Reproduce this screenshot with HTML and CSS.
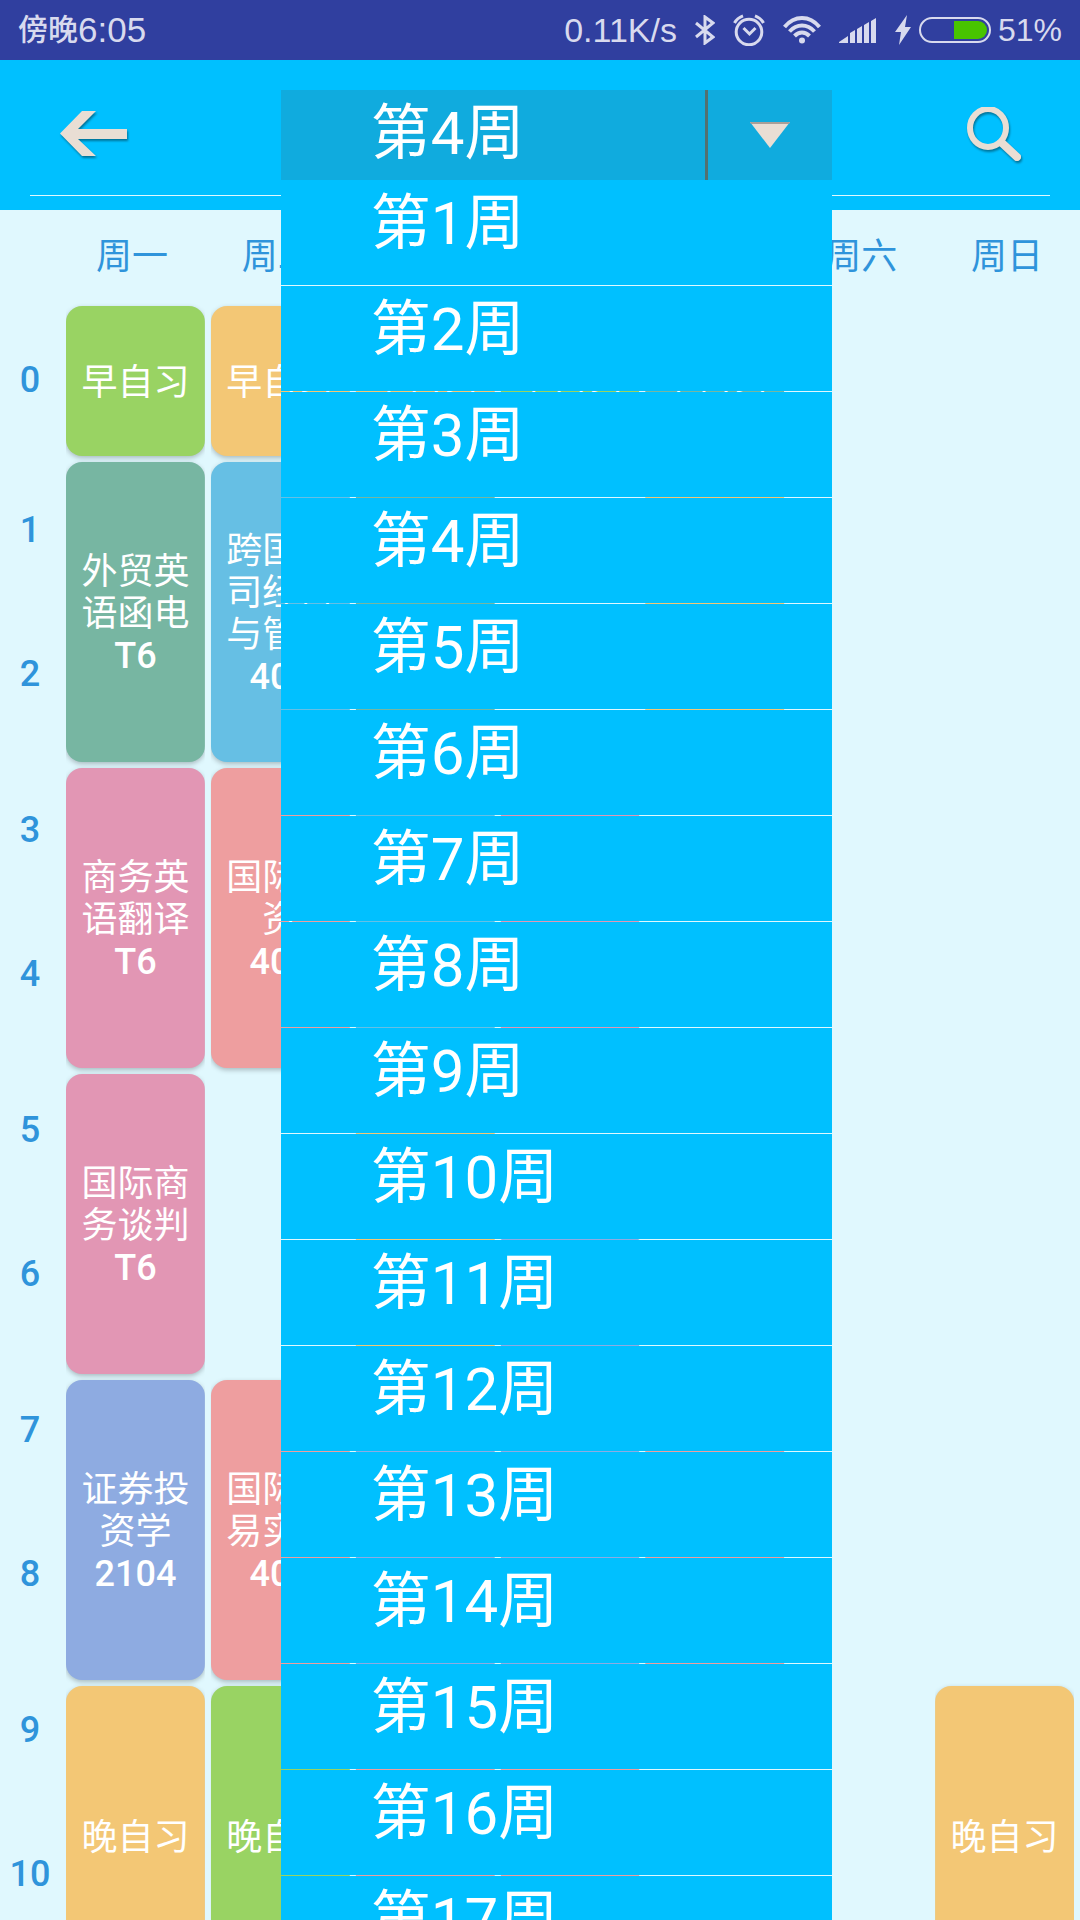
FILE: index.html
```
<!DOCTYPE html>
<html lang="zh-CN">
<head>
<meta charset="utf-8">
<meta name="viewport" content="width=device-width, initial-scale=1">
<title>课程表</title>
<link rel="stylesheet" href="styles.css">
</head>
<body>
<div class="status">
  <div class="clock"><span class="period">傍晚</span><span>6:05</span></div>
  <div class="indicators">
    <span class="speed">0.11K/s</span>
    <svg class="bluetooth" width="20" height="30" viewBox="0 0 20 30" aria-label="蓝牙"><path d="M1 8l17 14-8 6V2l8 6L1 22" fill="none" stroke="currentColor" stroke-width="3"/></svg>
    <svg class="alarm" width="32" height="32" viewBox="0 0 32 32" aria-label="闹钟"><g fill="none" stroke="currentColor" stroke-width="3"><circle cx="16" cy="18" r="12.8"/><path d="M10.5 14l6 6 6-6"/><path d="M1.500 9Q4 4 10 1.800M30.500 9Q28 4 22 1.800"/></g></svg>
    <svg class="wifi" width="38" height="28" viewBox="0 0 38 28" aria-label="无线网络"><g fill="none" stroke="currentColor" stroke-width="4"><path d="M1.500 11Q9 2 19 2T36.500 11"/><path d="M6.500 15.500Q12 9.500 19 9.500T31.500 15.500"/><path d="M11.500 20Q15 16.500 19 16.500T26.500 20"/></g><circle cx="19" cy="24.500" r="3"/></svg>
    <svg class="signal" width="38" height="26" viewBox="0 0 38 26" aria-label="信号"><path d="M0 26v-1l9-6v7zM11 26V16l5-3v13zM18 26V12l5-3v17zM25 26V8l5-3v21zM32 26V4l5-3v25z"/></svg>
    <svg class="bolt" width="16" height="30" viewBox="0 0 16 30" aria-label="充电中"><path d="M12 0L0 17h6L4 30 16 12h-6z"/></svg>
    <svg class="battery" width="72" height="26" viewBox="0 0 72 26" aria-label="电量"><rect x="1" y="1" width="70" height="24" rx="12" fill="none" stroke="currentColor" stroke-width="2"/><path class="charge" d="M35 4h24a9 9 0 0 1 0 18H35z"/></svg>
    <span class="percent">51%</span>
  </div>
</div>

<header class="toolbar">
  <div class="actions">
    <button class="icon-button back" type="button" aria-label="返回">
      <svg width="68" height="48" viewBox="0 0 68 48"><path d="M0 22.500L22 0h14L18 18h49v10H18l18 17H22z"/></svg>
    </button>
    <div class="week-picker">
      <button class="current" type="button" aria-haspopup="listbox" aria-expanded="true" aria-controls="weeks">
        <span class="current-week">第4周</span>
        <span class="arrow"><svg width="40" height="26" viewBox="0 0 40 26"><path d="M0 0h40L20 26z"/><path class="arrow-edge" d="M0 0h40l-1 2H1z"/></svg></span>
      </button>
      <ul class="weeks" id="weeks" role="listbox" aria-label="选择周次">
        <li role="option"><button type="button">第1周</button></li>
        <li role="option"><button type="button">第2周</button></li>
        <li role="option"><button type="button">第3周</button></li>
        <li role="option" aria-selected="true"><button type="button">第4周</button></li>
        <li role="option"><button type="button">第5周</button></li>
        <li role="option"><button type="button">第6周</button></li>
        <li role="option"><button type="button">第7周</button></li>
        <li role="option"><button type="button">第8周</button></li>
        <li role="option"><button type="button">第9周</button></li>
        <li role="option"><button type="button">第10周</button></li>
        <li role="option"><button type="button">第11周</button></li>
        <li role="option"><button type="button">第12周</button></li>
        <li role="option"><button type="button">第13周</button></li>
        <li role="option"><button type="button">第14周</button></li>
        <li role="option"><button type="button">第15周</button></li>
        <li role="option"><button type="button">第16周</button></li>
        <li role="option"><button type="button">第17周</button></li>
      </ul>
    </div>
    <button class="icon-button search" type="button" aria-label="搜索">
      <svg width="56" height="56" viewBox="0 0 56 56"><g fill="none" stroke="currentColor"><ellipse cx="21" cy="21" rx="18" ry="19" stroke-width="6"/><path d="M35 36l15 14" stroke-width="8" stroke-linecap="round"/></g></svg>
    </button>
  </div>
  <hr class="rule">
</header>

<main class="timetable">
  <div class="days">
    <span>周一</span><span>周二</span><span>周三</span><span>周四</span><span>周五</span><span>周六</span><span>周日</span>
  </div>
  <div class="grid">
    <div class="hours">
      <div class="slot"><span>0</span></div>
      <div class="slot double"><span>1</span><span>2</span></div>
      <div class="slot double"><span>3</span><span>4</span></div>
      <div class="slot double"><span>5</span><span>6</span></div>
      <div class="slot double"><span>7</span><span>8</span></div>
      <div class="slot double"><span>9</span><span>10</span></div>
    </div>

    <div class="lesson d1 p0 green">早自习</div>
    <div class="lesson d1 p1 teal">外贸英语函电<b>T6</b></div>
    <div class="lesson d1 p3 pink">商务英语翻译<b>T6</b></div>
    <div class="lesson d1 p5 pink">国际商务谈判<b>T6</b></div>
    <div class="lesson d1 p7 violet">证券投资学<b>2104</b></div>
    <div class="lesson d1 p9 amber">晚自习</div>

    <div class="lesson d2 p0 amber">早自习</div>
    <div class="lesson d2 p1 blue">跨国公司经营与管理<b>403</b></div>
    <div class="lesson d2 p3 coral">国际投资<b>403</b></div>
    <div class="lesson d2 p7 coral">国际贸易实务<b>403</b></div>
    <div class="lesson d2 p9 green">晚自习</div>

    <div class="lesson d3 p0 amber">早自习</div>
    <div class="lesson d3 p1 teal"></div>
    <div class="lesson d3 p3 blue"></div>
    <div class="lesson d3 p5 amber"></div>
    <div class="lesson d3 p7 violet"></div>
    <div class="lesson d3 p9 coral"></div>

    <div class="lesson d4 p0 green">早自习</div>
    <div class="lesson d4 p3 pink"></div>
    <div class="lesson d4 p6 violet"></div>
    <div class="lesson d4 p7 violet"></div>
    <div class="lesson d4 p9 coral"></div>

    <div class="lesson d5 p0 teal">早自习</div>
    <div class="lesson d5 p1 amber"></div>
    <div class="lesson d5 p7 coral"></div>

    <div class="lesson d7 p9 amber">晚自习</div>
  </div>
</main>
</body>
</html>
```
FILE: styles.css
```
* {
  box-sizing: border-box;
}

body {
  margin: 0;
  height: 100vh;
  overflow: hidden;
  display: flex;
  flex-direction: column;
  background: #e0f8fe;
  color: #fff;
  font-family: Roboto, "Noto Sans CJK SC", sans-serif;
}

button {
  margin: 0;
  padding: 0;
  border: 0;
  background: none;
  color: inherit;
  font: inherit;
  cursor: pointer;
}

svg {
  display: block;
  fill: currentColor;
}

/* Status bar */
.status {
  flex: none;
  display: flex;
  justify-content: space-between;
  align-items: center;
  height: 60px;
  padding: 0 18px;
  background: #303f9f;
  color: #d8daee;
  font-family: "Liberation Sans", "Noto Sans CJK SC", sans-serif;
  font-size: 34px;
  line-height: 60px;
}

.clock,
.indicators {
  display: flex;
  align-items: center;
}

.clock {
  font-size: 35px;
}

.period {
  font-size: 30px;
  font-weight: 500;
}

.speed,
.bluetooth,
.alarm,
.wifi,
.signal {
  margin-right: 18px;
}

.bolt {
  margin-right: 8px;
}

.battery {
  margin-right: 7px;
}

.charge {
  fill: #48c400;
}

.percent {
  font-size: 32px;
}

/* Toolbar */
.toolbar {
  flex: none;
  position: relative;
  z-index: 1;
  padding: 30px 0 14px;
  background: #00c0ff;
}

.actions {
  display: grid;
  grid-template-columns: 26fr 51fr 23fr;
  height: 90px;
}

.icon-button {
  display: flex;
  align-items: center;
  color: #e9ded4;
  filter: drop-shadow(1px 2px 1px rgba(0, 0, 0, 0.4));
}

.back {
  padding-left: 60px;
}

.search {
  justify-content: flex-end;
  padding-right: 57px;
}

.rule {
  height: 1px;
  margin: 15px 30px 0;
  border: 0;
  background: #e0f8fe;
}

/* Week picker */
.week-picker {
  position: relative;
  font-size: 60px;
  line-height: 88px;
}

.current {
  display: flex;
  width: 100%;
  height: 90px;
  background: #10abde;
  text-align: left;
}

.current-week {
  flex: 1;
  padding-left: 90px;
}

.arrow {
  display: flex;
  align-items: center;
  width: 127px;
  height: 90px;
  padding-left: 42px;
  border-left: 3px solid #53706f;
  color: #e9ded4;
}

.arrow-edge {
  fill: #a99f98;
}

.weeks {
  position: absolute;
  top: 100%;
  left: 0;
  right: 0;
  display: grid;
  gap: 1px;
  margin: 0;
  padding: 0;
  list-style: none;
}

.weeks button {
  display: block;
  width: 100%;
  height: 105px;
  padding: 0 0 17px 90px;
  background: #00c0ff;
  text-align: left;
}

/* Timetable */
.timetable {
  flex: 1;
  min-height: 0;
  overflow: hidden;
  font-size: 36px;
}

.days {
  display: grid;
  grid-template-columns: repeat(7, 1fr);
  height: 96px;
  padding-left: 59px;
  color: #2f94db;
  line-height: 94px;
  text-align: center;
}

.grid {
  display: grid;
  grid-template-columns: 60px repeat(7, 1fr);
  grid-template-rows: 150px repeat(10, 147px);
  gap: 6px;
  padding-right: 6px;
}

.hours {
  grid-column: 1;
  grid-row: 1 / span 11;
  color: #2f94db;
  font-weight: 500;
  line-height: 36px;
  text-align: center;
}

.slot {
  display: flex;
  flex-direction: column;
  gap: 108px;
  height: 150px;
  padding-top: 56px;
}

.slot.double {
  height: 300px;
}

.lesson {
  display: flex;
  flex-direction: column;
  justify-content: center;
  padding: 4px 12px 0;
  border-radius: 16px;
  box-shadow: 0 2px 5px rgba(0, 0, 0, 0.25);
  clip-path: inset(-8px 0);
  line-height: 42px;
  text-align: center;
}

.lesson b {
  font-weight: 500;
}

.d1 { grid-column: 2; }
.d2 { grid-column: 3; }
.d3 { grid-column: 4; }
.d4 { grid-column: 5; }
.d5 { grid-column: 6; }
.d7 { grid-column: 8; }

.p0 { grid-row: 1; }
.p1 { grid-row: 2 / span 2; }
.p3 { grid-row: 4 / span 2; }
.p5 { grid-row: 6 / span 2; }
.p6 { grid-row: 7; }
.p7 { grid-row: 8 / span 2; }
.p9 { grid-row: 10 / span 2; }

.green { background: #99d363; }
.amber { background: #f3c775; }
.teal { background: #77b6a2; }
.blue { background: #66bfe4; }
.pink { background: #e296b4; }
.coral { background: #ee9e9f; }
.violet { background: #8eabe1; }
```
